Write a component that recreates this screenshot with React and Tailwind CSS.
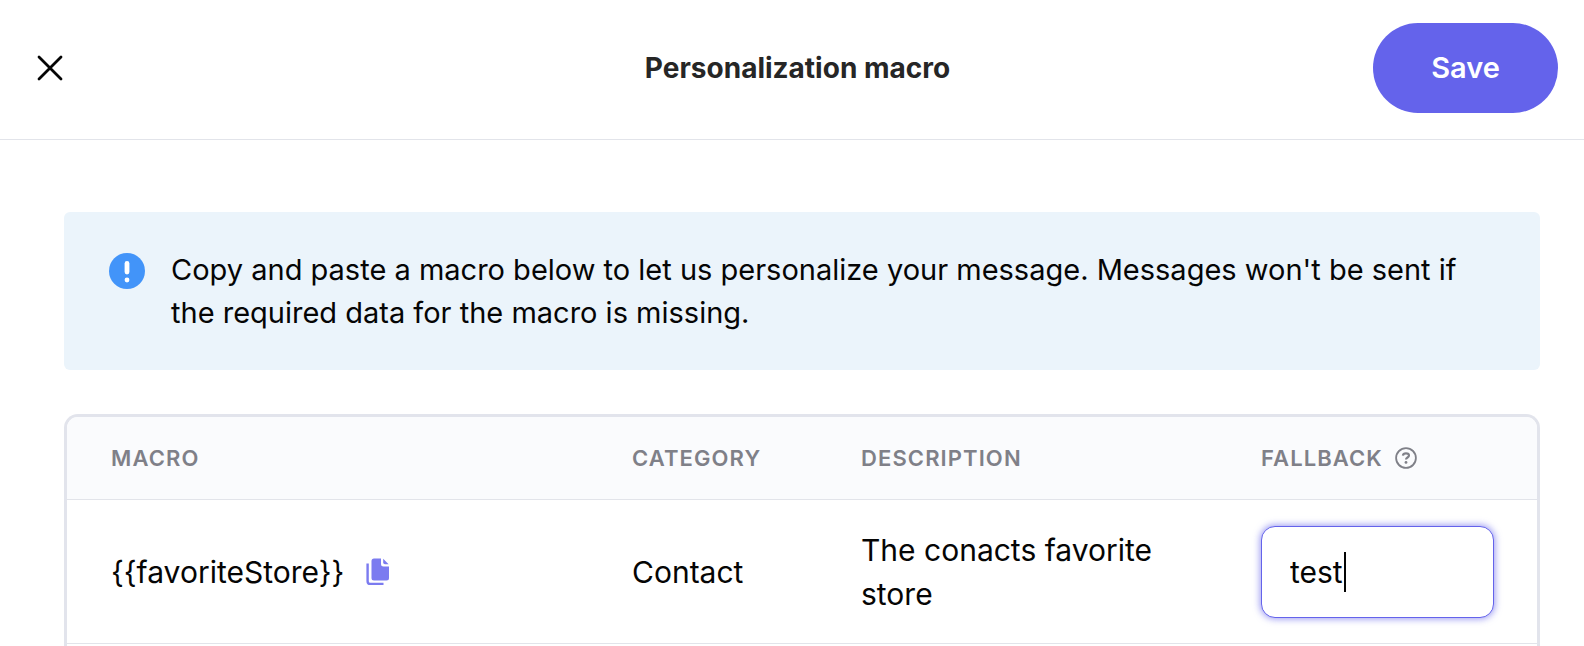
import React, { useState } from "react";

const macros = [
  {
    name: "{{favoriteStore}}",
    category: "Contact",
    description: "The conacts favorite store",
    fallback: "test",
  },
];

function CloseIcon() {
  return (
    <svg width="26" height="26" viewBox="0 0 26 26" fill="none" aria-hidden="true">
      <path
        d="M2 2L24 24M24 2L2 24"
        stroke="#050505"
        strokeWidth="2.8"
        strokeLinecap="round"
      />
    </svg>
  );
}

function AlertIcon() {
  return (
    <svg
      className="shrink-0"
      width="36"
      height="36"
      viewBox="0 0 36 36"
      aria-hidden="true"
    >
      <circle cx="18" cy="18" r="18" fill="#4294f9" />
      <rect x="15.6" y="8" width="4.8" height="13.5" rx="2.4" fill="#fff" />
      <circle cx="18" cy="27" r="2.4" fill="#fff" />
    </svg>
  );
}

function CopyIcon() {
  return (
    <svg width="24" height="28" viewBox="0 0 24 28" fill="none" aria-hidden="true">
      <path
        d="M1.6 5.5V23.2Q1.6 25.9 4.3 25.9H17.5"
        stroke="#7b7bf0"
        strokeWidth="2.4"
      />
      <path
        d="M8 0.5H15V6Q15 8.5 17.5 8.5H23V20Q23 22.5 20.5 22.5H8Q5.5 22.5 5.5 20V3Q5.5 0.5 8 0.5Z"
        fill="#7b7bf0"
      />
      <path d="M17.2 0.8L22.6 6.2H19Q17.2 6.2 17.2 4.4Z" fill="#7b7bf0" />
    </svg>
  );
}

function HelpIcon() {
  return (
    <svg width="22" height="22" viewBox="0 0 22 22" fill="none" aria-hidden="true">
      <circle cx="11" cy="11" r="9.9" stroke="#7f8088" strokeWidth="1.8" />
      <path
        d="M7.9 8.6C8.1 7.1 9.3 6.3 11 6.3C12.8 6.3 14 7.2 14 8.6C14 10.6 11 10.5 11 12.6"
        stroke="#7f8088"
        strokeWidth="2.2"
      />
      <circle cx="11" cy="15.4" r="1.4" fill="#7f8088" />
    </svg>
  );
}

function FallbackInput({ macro, initial }) {
  const [value, setValue] = useState(initial);
  const [typed, setTyped] = useState(false);

  return (
    <div className="relative">
      <input
        type="text"
        aria-label={`Fallback for ${macro}`}
        value={value}
        onChange={(e) => {
          setTyped(true);
          setValue(e.target.value);
        }}
        className={`block h-[92px] w-full rounded-[14px] border border-[#6463eb] bg-white px-7 text-[30px] text-[#050505] shadow-[0_0_7px_1px_rgba(100,99,235,0.65)] outline-none ${
          typed ? "caret-[#050505]" : "caret-transparent"
        }`}
      />
      {!typed && (
        <span className="pointer-events-none absolute top-[26px] left-[83px] h-10 w-0.5 bg-[#050505]" />
      )}
    </div>
  );
}

function Header() {
  return (
    <header className="grid h-[140px] shrink-0 grid-cols-[1fr_auto_1fr] items-center border-b border-[#e2e4ea] pr-[26px] pb-1 pl-[37px]">
      <button type="button" aria-label="Close" className="justify-self-start">
        <CloseIcon />
      </button>

      <h1 className="text-[28px] font-bold text-[#262626]">
        Personalization macro
      </h1>

      <button
        type="button"
        className="h-[90px] w-[185px] justify-self-end rounded-full bg-[#6463eb] text-[29px] font-semibold text-white"
      >
        Save
      </button>
    </header>
  );
}

function MacroTable() {
  return (
    <div className="mt-11 flex-1 overflow-hidden rounded-t-[14px] border-[3px] border-b-0 border-[#e2e4ec]">
      <table className="w-full table-fixed border-separate border-spacing-0 text-left">
        <thead>
          <tr className="h-[83px] bg-[#fafbfd] text-[22px] text-[#7f8088]">
            <th className="border-b border-[#e2e4ea] pl-11 font-semibold tracking-wider">
              MACRO
            </th>
            <th className="w-[229px] border-b border-[#e2e4ea] pl-11 font-semibold tracking-wider">
              CATEGORY
            </th>
            <th className="w-[400px] border-b border-[#e2e4ea] pl-11 font-semibold tracking-wider">
              DESCRIPTION
            </th>
            <th className="w-[320px] border-b border-[#e2e4ea] pl-11 font-semibold tracking-wider">
              <div className="flex items-center gap-3">
                FALLBACK
                <button type="button" aria-label="About fallbacks">
                  <HelpIcon />
                </button>
              </div>
            </th>
          </tr>
        </thead>

        <tbody>
          {macros.map((macro) => (
            <tr
              key={macro.name}
              className="h-36 text-[30px] leading-[44px] text-[#050505]"
            >
              <td className="border-b border-[#e2e4ea] pl-11">
                <div className="flex items-center gap-[22px]">
                  {macro.name}
                  <button type="button" aria-label={`Copy ${macro.name}`}>
                    <CopyIcon />
                  </button>
                </div>
              </td>
              <td className="border-b border-[#e2e4ea] pl-11">{macro.category}</td>
              <td className="border-b border-[#e2e4ea] pr-11 pl-11">
                {macro.description}
              </td>
              <td className="border-b border-[#e2e4ea] pr-[43px] pl-11">
                <FallbackInput macro={macro.name} initial={macro.fallback} />
              </td>
            </tr>
          ))}
        </tbody>
      </table>
    </div>
  );
}

function App() {
  return (
    <div className="flex min-h-screen flex-col bg-white font-['Inter',sans-serif]">
      <Header />

      <main className="flex flex-1 flex-col pt-[72px] pr-11 pl-16">
        {/* NOTICE */}
        <div className="flex items-center gap-[26px] rounded-md bg-[#ebf4fb] py-9 pr-11 pl-[45px]">
          <div className="self-start pt-[5px]">
            <AlertIcon />
          </div>
          <p className="text-[29px] leading-[43px] text-[#050505]">
            Copy and paste a macro below to let us personalize your message.
            Messages won't be sent if the required data for the macro is missing.
          </p>
        </div>

        {/* MACROS */}
        <MacroTable />
      </main>
    </div>
  );
}

export default App;
